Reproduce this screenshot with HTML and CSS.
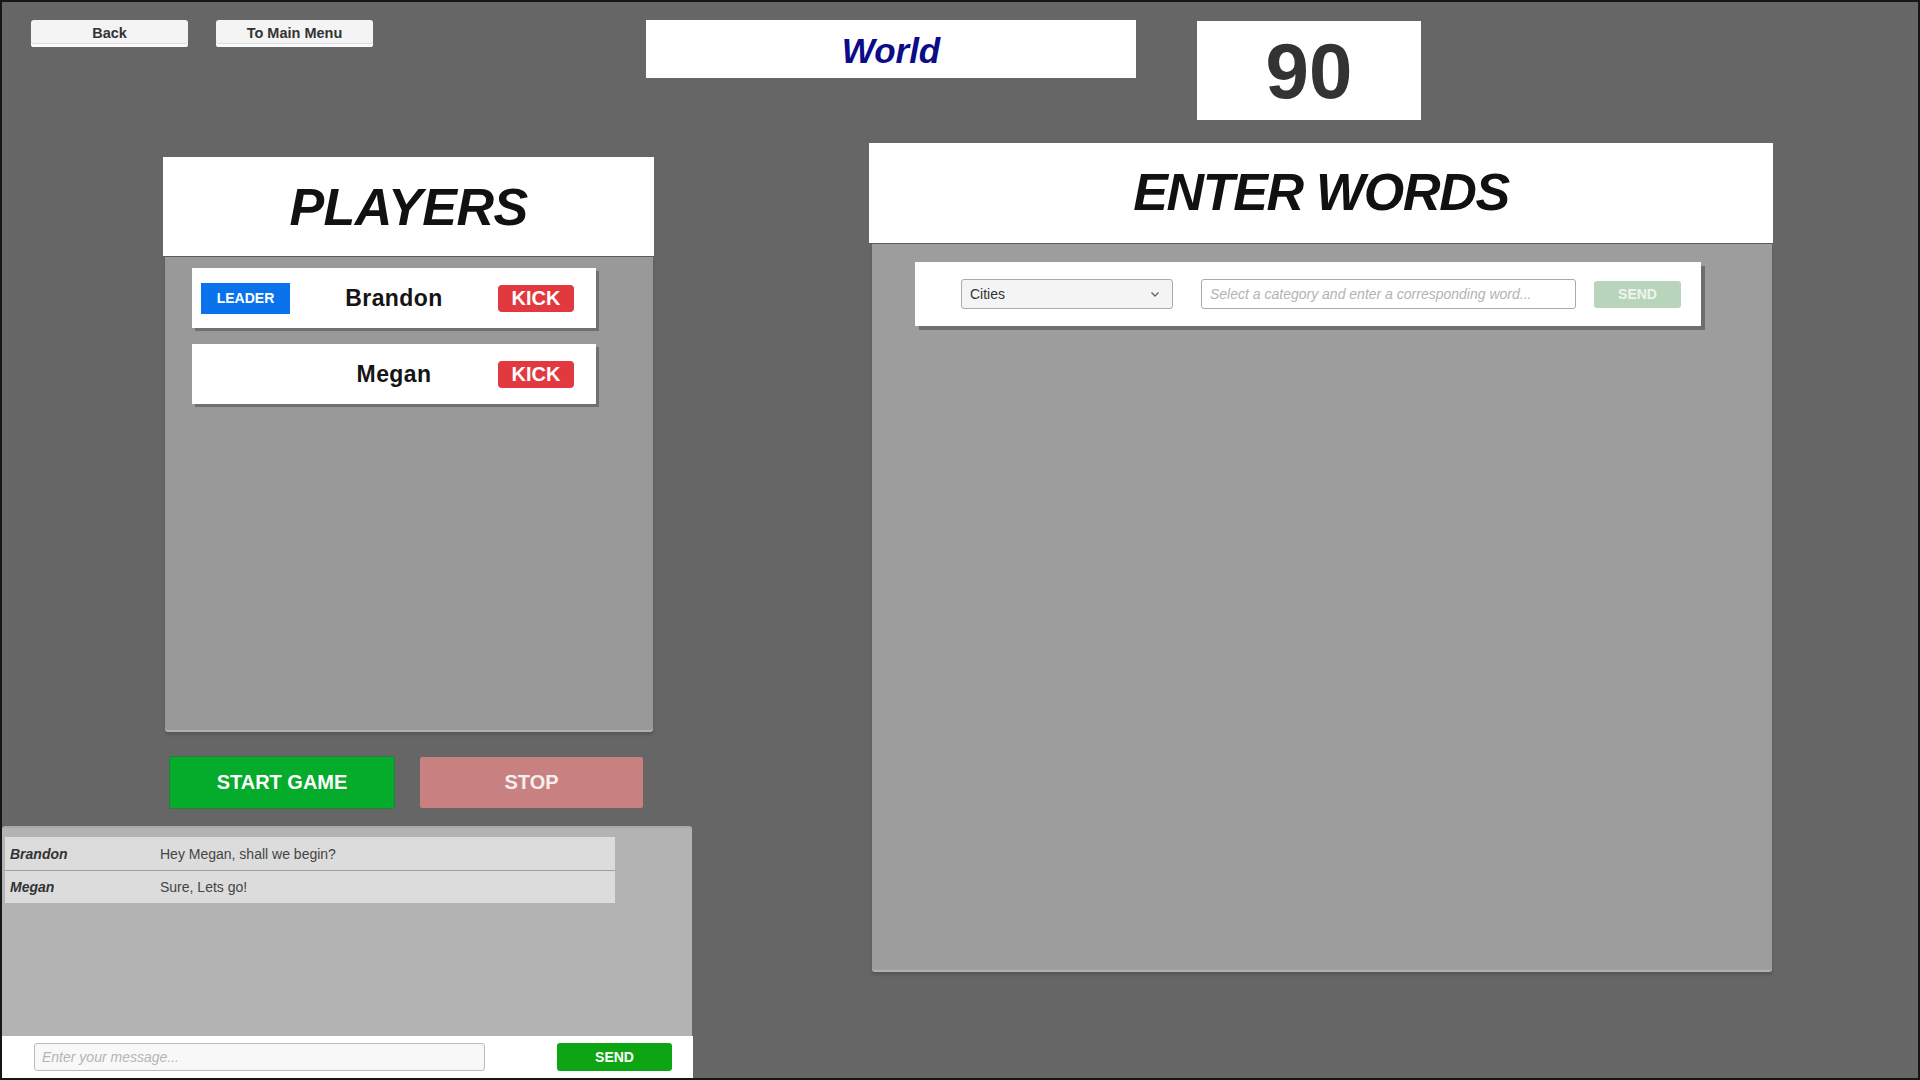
FILE: index.html
```html
<!DOCTYPE html>
<html lang="en">
<head>
    <meta charset="UTF-8">
    <meta name="viewport" content="width=device-width, initial-scale=1.0">
    <title>Word Game - Lobby</title>
    <link rel="stylesheet" href="styles.css">
</head>
<body>
    <div class="screen">
        <header class="topbar">
            <button class="nav-btn">Back</button>
            <button class="nav-btn">To Main Menu</button>
            <div class="category-box">World</div>
            <div class="timer-box">90</div>
        </header>

        <main class="main">
            <section class="left-col">
                <!-- Player list -->
                <div class="players">
                    <div class="panel-head players-head">PLAYERS</div>
                    <div class="panel-body players-body">
                        <div class="player-card">
                            <span class="leader-tag">LEADER</span>
                            <span class="player-name">Brandon</span>
                            <button class="kick-btn">KICK</button>
                        </div>
                        <div class="player-card">
                            <span></span>
                            <span class="player-name">Megan</span>
                            <button class="kick-btn">KICK</button>
                        </div>
                    </div>
                </div>

                <div class="game-actions">
                    <button class="start-btn">START GAME</button>
                    <button class="stop-btn">STOP</button>
                </div>

                <!-- Chat -->
                <div class="chat">
                    <div class="chat-log">
                        <div class="chat-row">
                            <span class="chat-name">Brandon</span>
                            <span class="chat-text">Hey Megan, shall we begin?</span>
                        </div>
                        <div class="chat-row">
                            <span class="chat-name">Megan</span>
                            <span class="chat-text">Sure, Lets go!</span>
                        </div>
                    </div>
                    <div class="chat-bar">
                        <input type="text" class="chat-input" placeholder="Enter your message...">
                        <button class="send-btn">SEND</button>
                    </div>
                </div>
            </section>

            <section class="right-col">
                <div class="panel-head words-head">ENTER WORDS</div>
                <div class="panel-body words-body">
                    <div class="word-form">
                        <div class="category-select">
                            <span>Cities</span>
                            <svg width="10" height="7" viewBox="0 0 10 7"><path d="M1.5 1.5 L5 5 L8.5 1.5" fill="none" stroke="#666" stroke-width="1.4"/></svg>
                        </div>
                        <input type="text" class="word-input" placeholder="Select a category and enter a corresponding word...">
                        <button class="word-send" disabled>SEND</button>
                    </div>
                </div>
            </section>
        </main>
    </div>
</body>
</html>
```

FILE: styles.css
```css
:root {
    --bg-color: #666666;
    --panel-color: #9d9d9d;
    --chat-color: #b3b3b3;
    --green: #05ab2b;
    --red: #e2383f;
    --blue: #0b72ee;
    --text-color: #111;
}

* {
    box-sizing: border-box;
}

body {
    margin: 0;
    font-family: 'Liberation Sans', Arial, sans-serif;
    color: var(--text-color);
    background-color: #111;
}

button, input {
    font-family: inherit;
}

.screen {
    width: 1920px;
    height: 1080px;
    border: 2px solid #161616;
    background-color: var(--bg-color);
    overflow: hidden;
}

/* Top bar */
.topbar {
    display: flex;
    align-items: flex-start;
    height: 118px;
    padding: 18px 0 0 29px;
}

.nav-btn {
    width: 157px;
    height: 27px;
    margin-right: 28px;
    border: none;
    border-radius: 3px;
    background-color: #f4f4f4;
    box-shadow: inset 0 -3px 0 #fafafa, inset 0 -4px 0 #dcdcdc;
    color: #333;
    font-size: 14.5px;
    font-weight: bold;
    padding: 0 0 2px;
}

.category-box {
    width: 490px;
    height: 58px;
    margin-left: 245px;
    background-color: white;
    color: #0c0c8a;
    font-size: 35px;
    font-weight: bold;
    font-style: italic;
    display: flex;
    justify-content: center;
    align-items: center;
    padding-top: 4px;
}

.timer-box {
    width: 224px;
    height: 99px;
    margin: 1px 0 0 61px;
    background-color: white;
    color: #333;
    font-size: 78px;
    font-weight: bold;
    display: flex;
    justify-content: center;
    align-items: center;
    padding-top: 2px;
}

/* Main layout */
.main {
    display: flex;
    align-items: flex-start;
}

.left-col {
    width: 692px;
    display: flex;
    flex-direction: column;
}

.right-col {
    width: 904px;
    margin: 23px 0 0 175px;
}

.panel-head {
    background-color: white;
    font-weight: bold;
    font-style: italic;
    font-size: 52px;
    display: flex;
    justify-content: center;
    align-items: center;
    border-bottom: 1px solid #5c5c5c;
}

.panel-body {
    background-color: var(--panel-color);
    border-radius: 0 0 3px 3px;
    box-shadow: 0 2px 0 #b0b0b0, 0 5px 3px rgba(0, 0, 0, 0.15);
}

/* Players */
.players {
    width: 491px;
    margin: 37px 0 0 161px;
}

.players-head {
    height: 100px;
    letter-spacing: -0.5px;
    padding-top: 1px;
}

.players-body {
    height: 473px;
    margin: 0 1px 0 2px;
    padding: 11px 0 0 27px;
    background-color: #999;
}

.player-card {
    width: 404px;
    height: 60px;
    margin-bottom: 16px;
    background-color: white;
    display: grid;
    grid-template-columns: 89px 1fr 76px;
    align-items: center;
    padding: 0 22px 0 9px;
    box-shadow: 3px 3px 0 #707070;
}

.leader-tag {
    height: 31px;
    background-color: var(--blue);
    color: white;
    font-size: 14px;
    font-weight: bold;
    display: flex;
    justify-content: center;
    align-items: center;
}

.player-name {
    text-align: center;
    font-size: 23px;
    font-weight: bold;
    letter-spacing: 0.4px;
    color: #151515;
}

.kick-btn {
    height: 27px;
    border: none;
    border-radius: 4px;
    background-color: var(--red);
    color: white;
    font-size: 20px;
    font-weight: bold;
    padding: 0;
}

/* Start / stop */
.game-actions {
    display: flex;
    gap: 26px;
    margin: 27px 0 0 168px;
}

.start-btn, .stop-btn {
    width: 224px;
    height: 51px;
    border: none;
    border-radius: 2px;
    color: white;
    font-size: 20px;
    font-weight: bold;
}

.start-btn {
    background-color: var(--green);
    box-shadow: 0 0 0 1px #2f7a3c;
}

.stop-btn {
    width: 223px;
    background-color: #c98080;
    color: #f6eeee;
}

/* Chat */
.chat {
    width: 690px;
    margin-top: 18px;
}

.chat-log {
    height: 210px;
    background-color: var(--chat-color);
    border-radius: 3px 3px 0 0;
    padding: 9px 0 0 3px;
    border-top: 2px solid #a9a9a9;
}

.chat-row {
    width: 610px;
    height: 33px;
    background-color: #dcdcdc;
    display: flex;
    align-items: center;
    font-size: 14px;
}

.chat-row + .chat-row {
    border-top: 1px solid #a0a0a0;
}

.chat-name {
    width: 155px;
    padding-left: 5px;
    font-weight: bold;
    font-style: italic;
    color: #333;
}

.chat-text {
    color: #444;
}

.chat-bar {
    width: 691px;
    height: 42px;
    background-color: white;
    display: flex;
    align-items: center;
    padding-left: 32px;
}

.chat-input {
    width: 451px;
    height: 28px;
    border: 1px solid #bbb;
    border-radius: 3px;
    background-color: #f8f8f8;
    padding: 0 7px;
    font-size: 14px;
}

.chat-input::placeholder {
    color: #b5b5b5;
    font-style: italic;
}

.send-btn {
    width: 115px;
    height: 28px;
    margin-left: 72px;
    border: none;
    border-radius: 3px;
    background-color: #0ea514;
    color: white;
    font-size: 14px;
    font-weight: bold;
}

/* Enter words */
.words-head {
    height: 101px;
    letter-spacing: -1.3px;
    padding-bottom: 2px;
}

.words-body {
    height: 726px;
    margin: 0 1px 0 3px;
    padding: 18px 0 0 43px;
}

.word-form {
    width: 786px;
    height: 64px;
    background-color: white;
    display: flex;
    align-items: center;
    padding-left: 46px;
    box-shadow: 4px 4px 0 #6e6e6e;
}

.category-select {
    width: 212px;
    height: 30px;
    border: 1px solid #aaa;
    border-radius: 3px;
    background-color: #f4f4f4;
    display: flex;
    justify-content: space-between;
    align-items: center;
    padding: 0 12px 0 8px;
    font-size: 14px;
    color: #333;
}

.word-input {
    width: 375px;
    height: 30px;
    margin-left: 28px;
    border: 1px solid #aaa;
    border-radius: 3px;
    padding: 0 8px;
    font-size: 14px;
}

.word-input::placeholder {
    color: #b3b3b3;
    font-style: italic;
}

.word-send {
    width: 87px;
    height: 27px;
    margin-left: 18px;
    border: none;
    border-radius: 3px;
    background-color: #b8d5bb;
    color: #eef5ef;
    font-size: 14px;
    font-weight: bold;
}
```
